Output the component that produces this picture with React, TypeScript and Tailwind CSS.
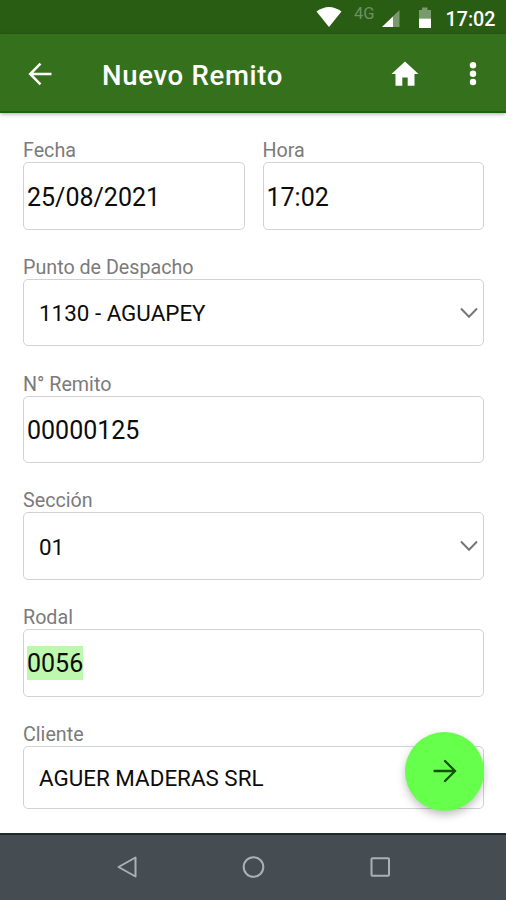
import React from 'react';

const Chevron = () => (
  <svg width="20" height="14" viewBox="0 0 20 14" fill="none" stroke="#777777" strokeWidth="2">
    <path d="M2 2.5L10 10.7L18 2.5" />
  </svg>
);

type FieldProps = {
  label: string;
  value: string;
  select?: boolean;
  highlighted?: boolean;
  last?: boolean;
};

function Field({ label, value, select, highlighted, last }: FieldProps) {
  return (
    <div className="flex h-[116.75px] flex-1 flex-col">
      <span className="h-[25px] pt-px text-[19.7px] leading-[25px] whitespace-nowrap text-[#7b7b7b]">{label}</span>
      <div
        className={`flex items-center justify-between rounded-[5px] border-[1.5px] border-[#d2d2d2] bg-white ${
          last ? 'h-[63px]' : 'h-[67.5px]'
        } ${select ? 'pr-[4px] pl-[15px]' : 'px-[3px]'}`}
      >
        <span
          className={`whitespace-nowrap text-[#0c0c0c] ${select ? 'pt-[3px] text-[22.4px]' : 'text-[25px]'} ${
            highlighted ? 'bg-[#bdf8ae] pt-[2px] leading-[32px]' : ''
          } ${!select && !highlighted ? 'pt-[3px]' : ''}`}
        >
          {value}
        </span>
        {select && !last && <Chevron />}
      </div>
    </div>
  );
}

function StatusBar() {
  return (
    <div className="flex h-[34px] bg-[#295d14] text-white">
      <svg width="506" height="34" viewBox="0 0 506 34">
        {/* Wifi */}
        <path d="M316.500 11.500Q329 2.500 341.500 11.500L329 27Z" fill="#fff" />
        <text x="354" y="18.800" fontSize="16.500" fontWeight="400" fontFamily="Roboto, sans-serif" fill="#6d9160">
          4G
        </text>
        {/* Signal */}
        <path d="M399.500 10V27H382Z" fill="#789a6c" />
        <path d="M393 16.500V27H382Z" fill="#fff" />
        {/* Battery */}
        <path d="M419 10H422V7.500H427.500V10H431V18.500H419Z" fill="#789a6c" />
        <path d="M419 18.500H431V28H419Z" fill="#fff" />
        <text x="445.500" y="25.500" fontSize="19.700" fontWeight="500" fontFamily="Roboto, sans-serif" fill="#fff">
          17:02
        </text>
      </svg>
    </div>
  );
}

function Header() {
  return (
    <header className="flex h-[79px] items-center border-b-2 border-[#1c6210] bg-[#35711d] pt-[2px] text-white shadow-[0_1px_4px_rgba(0,0,0,0.35)]">
      <button className="ml-[27px]">
        <svg width="26" height="26" viewBox="0 0 26 26" fill="none" stroke="#fff" strokeWidth="2.500">
          <path d="M24.500 13H3.500M13.500 2.700L3.200 13L13.500 23.300" />
        </svg>
      </button>
      <h1 className="ml-[49px] flex-1 pt-[4px] text-[27.5px] leading-none font-medium tracking-[0.7px] whitespace-nowrap">Nuevo Remito</h1>
      <button className="mr-[50px]">
        <svg width="28" height="26" viewBox="0 0 28 26" fill="#fff">
          <path d="M14 0.500L0.500 13H4.500V24.800H11.300V16.500H16.700V24.800H23.500V13H27.500Z" />
        </svg>
      </button>
      <button className="mr-[29px]">
        <svg width="8" height="26" viewBox="0 0 8 26" fill="#fff">
          <circle cx="4" cy="4.300" r="3.200" />
          <circle cx="4" cy="12.700" r="3.200" />
          <circle cx="4" cy="21" r="3.200" />
        </svg>
      </button>
    </header>
  );
}

function NavBar() {
  return (
    <nav className="flex h-[67px] items-center justify-between border-t-2 border-[#1b2b2d] bg-[#454d52] px-[115px] pb-[2px]">
      <svg width="24" height="26" viewBox="0 0 24 26" fill="none" stroke="#abb0b3" strokeWidth="2" strokeLinejoin="round">
        <path d="M20.500 3.500V22.500L3.500 13Z" />
      </svg>
      <svg width="26" height="26" viewBox="0 0 26 26" fill="none" stroke="#abb0b3" strokeWidth="2">
        <circle cx="12.500" cy="13" r="9.800" />
      </svg>
      <svg width="22" height="26" viewBox="0 0 22 26" fill="none" stroke="#abb0b3" strokeWidth="2">
        <rect x="2.500" y="4.300" width="17.500" height="17.500" rx="1" />
      </svg>
    </nav>
  );
}

export default function App() {
  return (
    <div className="relative flex h-[900px] w-[506px] flex-col overflow-hidden bg-white font-['Roboto',sans-serif]">
      <StatusBar />
      <Header />
      <main className="flex-1 overflow-hidden pt-[24px] pr-[22px] pl-[23px]">
        <div className="flex gap-[18px]">
          <Field label="Fecha" value="25/08/2021" />
          <Field label="Hora" value="17:02" />
        </div>
        <Field label="Punto de Despacho" value="1130 - AGUAPEY" select />
        <Field label="N° Remito" value="00000125" />
        <Field label="Sección" value="01" select />
        <Field label="Rodal" value="0056" highlighted />
        <Field label="Cliente" value="AGUER MADERAS SRL" select last />
      </main>
      <NavBar />

      {/* Floating next button */}
      <button className="absolute top-[732px] left-[405px] flex h-[79px] w-[79px] items-center justify-center rounded-full bg-[#66ff4b] pb-px shadow-[0_4px_9px_rgba(0,0,0,0.25)]">
        <svg width="26" height="26" viewBox="0 0 26 26" fill="none" stroke="#17500b" strokeWidth="2.300" strokeLinecap="round">
          <path d="M2.500 13H23M13 3L23 13L13 23" />
        </svg>
      </button>
    </div>
  );
}
